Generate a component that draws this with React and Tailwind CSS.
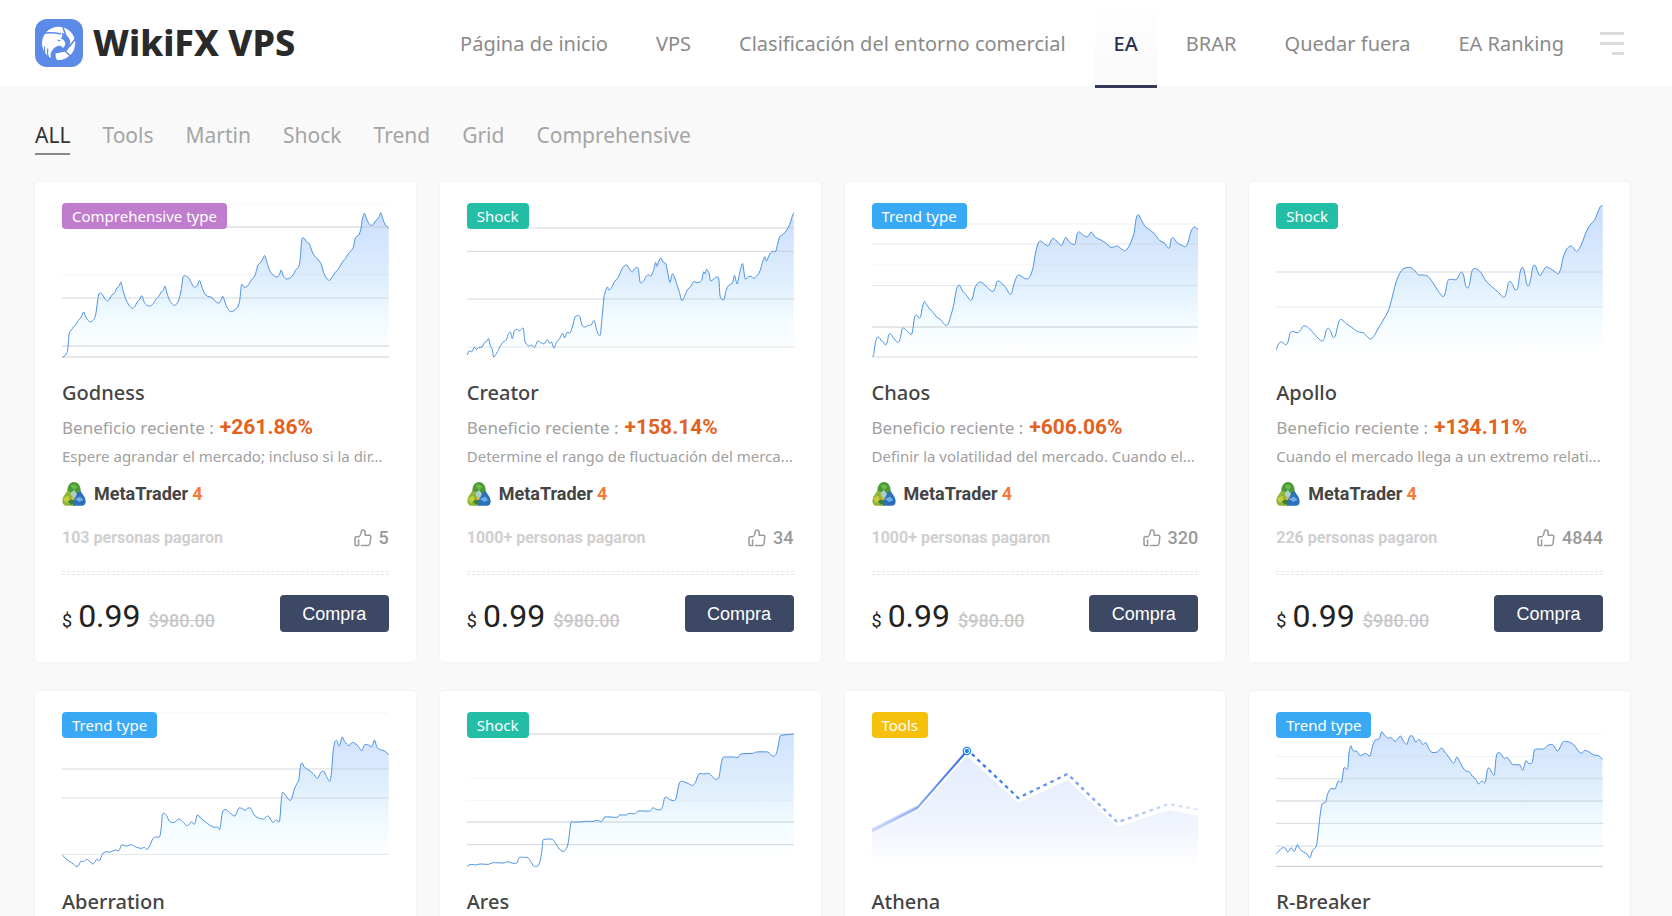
import React, { useState } from 'react'

const navLinks = [
    "Página de inicio",
    "VPS",
    "Clasificación del entorno comercial",
    "EA",
    "BRAR",
    "Quedar fuera",
    "EA Ranking",
];

const categories = ["ALL", "Tools", "Martin", "Shock", "Trend", "Grid", "Comprehensive"];

const badges = {
    "Comprehensive type": "bg-[#c07dce]",
    "Shock": "bg-[#24bea7]",
    "Trend type": "bg-[#3aa9f5]",
    "Tools": "bg-[#f6c00b]",
};

// grid: [y, opacity], points: x,y pairs inside of viewBox
const products = [
    {
        name: "Godness",
        type: "Comprehensive type",
        profit: "+261.86%",
        desc: "Espere agrandar el mercado; incluso si la dir...",
        paid: "103 personas pagaron",
        likes: 5,
        viewBox: "95 70 981 465",
        grid: [[71, 0.15], [142, 0.9], [285, 0.2], [355, 0.7], [499, 0.9], [532, 0.9]],
        points: "96,532 103,529 111,515 114,490 117,460 123,452 130,441 137,435 144,422 153,412 160,397 166,412 173,422 181,427 190,420 196,406 201,370 205,346 210,339 218,347 224,358 231,364 238,358 244,347 253,339 260,325 267,318 272,307 278,332 285,354 294,373 305,386 314,380 320,368 329,358 335,348 341,365 349,376 360,379 369,372 376,360 386,350 392,338 399,332 404,319 411,343 418,362 426,373 433,377 441,371 447,356 453,330 458,294 463,288 475,294 483,309 491,322 500,319 508,303 515,322 523,341 532,350 545,353 554,364 565,370 572,362 578,350 585,370 592,386 602,396 614,391 624,379 629,360 634,315 643,323 653,318 662,303 673,290 679,272 683,256 692,248 698,237 704,228 712,254 720,276 730,287 741,292 748,284 753,271 759,287 768,298 780,295 789,285 797,270 805,263 810,240 815,180 822,176 830,188 838,193 846,216 853,228 862,238 873,252 880,278 889,295 898,302 906,292 915,279 923,270 932,256 939,244 946,237 953,224 963,213 970,202 976,174 986,166 992,149 997,118 1003,101 1010,119 1019,135 1028,136 1036,124 1046,114 1052,99 1059,120 1066,136 1076,146",
    },
    {
        name: "Creator",
        type: "Shock",
        profit: "+158.14%",
        desc: "Determine el rango de fluctuación del merca...",
        paid: "1000+ personas pagaron",
        likes: 34,
        viewBox: "91 70 981 465",
        grid: [[145, 0.8], [215, 0.8], [358, 0.8], [502, 0.5]],
        points: "92,526 97,514 106,516 113,502 118,509 126,504 136,502 143,489 151,484 156,477 161,498 167,510 171,532 177,525 183,516 190,501 199,488 209,481 216,461 222,458 227,477 233,454 241,449 249,454 260,446 265,485 276,499 286,496 294,504 303,484 314,490 323,492 332,480 339,491 345,487 352,505 360,487 369,477 378,461 384,475 391,459 401,459 409,436 416,411 429,410 436,436 445,442 456,437 464,436 473,423 482,457 491,467 495,428 499,390 503,348 512,322 517,331 525,324 534,305 543,297 550,282 559,263 570,256 579,268 587,277 595,266 605,266 611,308 622,303 629,290 637,285 643,290 651,272 657,248 661,260 667,244 673,235 681,248 688,252 693,275 700,308 707,283 713,290 721,314 728,335 736,363 744,350 753,330 763,320 771,306 781,309 795,303 801,277 806,282 810,269 818,281 822,303 830,300 839,292 847,298 851,350 862,360 869,332 877,317 888,310 894,287 902,313 908,287 914,262 919,253 926,297 936,291 945,290 952,296 963,287 971,273 977,252 985,231 990,244 1000,223 1009,215 1018,215 1023,195 1030,171 1040,164 1051,151 1060,134 1066,114 1072,99",
    },
    {
        name: "Chaos",
        type: "Trend type",
        profit: "+606.06%",
        desc: "Definir la volatilidad del mercado. Cuando el...",
        paid: "1000+ personas pagaron",
        likes: 320,
        viewBox: "93 70 981 465",
        grid: [[133, 0.3], [193, 0.45], [256, 0.2], [318, 0.5], [442, 0.9], [532, 0.7]],
        points: "94,532 98,525 103,490 108,474 114,473 121,483 127,487 133,496 139,487 143,466 149,462 156,473 164,483 172,488 178,476 183,449 188,445 196,452 204,459 212,464 217,440 221,411 227,406 234,415 239,411 244,384 250,366 257,374 266,388 277,399 287,412 299,420 308,432 316,437 323,430 330,407 338,377 345,336 350,320 356,317 365,334 377,347 388,362 395,355 402,325 410,311 420,307 433,317 445,329 456,336 463,324 467,307 474,304 484,313 495,324 505,342 512,341 519,314 528,290 535,286 546,293 558,298 567,291 576,266 583,225 590,196 597,184 608,190 622,199 630,184 638,176 650,187 662,198 669,183 675,173 683,184 694,193 703,192 709,162 716,157 728,167 741,171 751,157 764,173 778,180 794,189 808,202 820,202 830,199 842,208 854,213 863,202 871,186 880,159 886,117 893,105 902,122 914,141 929,152 943,165 957,183 971,190 981,204 987,203 991,180 997,174 1010,190 1024,197 1034,201 1042,188 1051,154 1060,142 1068,146 1074,152",
    },
    {
        name: "Apollo",
        type: "Shock",
        profit: "+134.11%",
        desc: "Cuando el mercado llega a un extremo relati...",
        paid: "226 personas pagaron",
        likes: 4844,
        viewBox: "93 70 981 465",
        grid: [[277, 0.7], [382, 0.4]],
        points: "94,510 99,496 106,487 115,490 122,496 129,487 135,461 143,455 156,459 166,453 173,441 182,439 194,448 208,463 222,478 232,484 239,473 244,451 251,446 257,455 264,473 271,469 277,444 283,423 291,420 304,432 320,443 339,456 356,460 367,471 377,478 386,471 399,448 415,421 430,394 440,360 452,313 462,286 472,270 484,264 497,264 508,271 520,285 535,286 549,290 563,308 580,334 594,351 601,341 608,305 616,299 634,300 642,288 649,277 656,286 662,317 668,325 674,314 681,275 690,266 703,273 713,286 723,304 741,321 762,339 776,353 784,342 790,312 796,305 803,314 811,331 819,323 826,277 833,263 839,277 846,314 852,318 858,296 864,262 871,257 878,275 886,288 894,276 904,262 917,267 930,276 940,283 948,266 955,234 966,208 978,199 986,205 995,216 1004,206 1013,187 1023,160 1035,137 1049,122 1058,100 1066,82 1074,77",
    },
    {
        name: "Aberration",
        type: "Trend type",
        profit: "+190.32%",
        desc: "Sistema clásico de seguimiento de tenden...",
        paid: "310 personas pagaron",
        likes: 27,
        viewBox: "95 82 981 465",
        grid: [[85, 0.2], [253, 0.7], [340, 0.6], [509, 0.5]],
        points: "96,511 106,522 119,531 129,538 137,545 145,543 151,530 160,531 169,524 178,530 187,538 194,532 199,524 208,527 216,509 224,502 240,502 255,496 266,498 274,481 288,484 304,480 316,487 333,491 343,488 350,495 358,484 368,462 378,457 388,456 393,430 396,392 402,386 409,393 418,410 432,413 446,403 457,411 469,422 475,421 484,411 493,419 501,391 511,400 527,413 548,427 562,427 569,433 577,382 587,375 598,383 614,394 625,371 634,371 645,377 652,371 662,371 672,391 685,400 700,403 711,394 717,397 728,413 739,405 748,410 753,350 757,323 766,332 777,346 784,343 792,315 800,297 806,285 811,245 816,235 823,248 836,256 849,267 862,281 871,265 880,259 888,273 899,290 904,264 909,200 914,173 920,168 928,184 936,157 944,171 956,183 967,173 981,181 995,198 1002,182 1013,180 1025,186 1033,166 1041,188 1051,195 1064,199 1076,210",
    },
    {
        name: "Ares",
        type: "Shock",
        profit: "+175.48%",
        desc: "Estrategia de oscilación con control estric...",
        paid: "198 personas pagaron",
        likes: 61,
        viewBox: "91 82 981 465",
        grid: [[148, 0.9], [281, 0.15], [347, 0.2], [412, 0.9], [480, 0.8]],
        points: "92,545 103,539 117,541 130,538 155,539 170,534 200,535 213,531 225,535 240,535 248,519 260,518 274,519 283,531 291,544 302,545 309,534 315,505 319,468 325,464 347,464 358,477 368,493 379,500 388,494 395,474 403,414 410,412 430,412 450,410 470,410 480,407 496,410 505,397 541,398 549,391 569,391 577,386 594,387 605,379 620,379 641,379 649,369 659,374 673,375 679,362 684,340 690,338 701,345 712,348 719,340 725,309 731,291 741,291 756,297 768,302 777,293 787,268 802,268 817,266 828,276 840,285 848,276 853,244 859,219 870,217 890,217 905,218 914,208 948,206 960,202 994,202 1001,209 1010,214 1018,210 1024,191 1030,158 1036,152 1072,148",
    },
    {
        name: "Athena",
        type: "Tools",
        profit: "+88.20%",
        desc: "Herramienta auxiliar para gestionar sus o...",
        paid: "540 personas pagaron",
        likes: 112,
        viewBox: "93 82 981 465",
        forecast: true,
    },
    {
        name: "R-Breaker",
        type: "Trend type",
        profit: "+302.75%",
        desc: "Combina la ruptura de tendencia y la reve...",
        paid: "275 personas pagaron",
        likes: 93,
        viewBox: "93 82 981 465",
        grid: [[148, 0.2], [215, 0.25], [282, 0.6], [349, 0.9], [416, 0.7], [484, 0.7], [545, 1]],
        points: "93,507 101,501 109,491 121,490 129,503 138,489 148,500 157,480 165,494 176,502 187,509 195,520 203,497 214,485 219,450 225,395 231,359 242,352 248,328 258,311 270,313 280,289 290,292 297,250 308,252 312,205 318,183 324,198 336,200 346,213 362,206 375,214 383,184 391,166 403,162 410,142 419,152 431,161 438,158 450,170 458,163 467,154 476,170 486,179 494,156 504,155 512,172 523,164 533,179 543,174 552,192 561,203 577,202 590,190 600,203 613,219 625,236 630,231 636,217 645,232 655,250 663,259 673,261 682,274 693,284 701,298 711,289 721,293 728,254 735,252 748,272 753,225 758,205 767,206 778,221 788,219 803,239 825,241 834,257 843,228 851,236 862,233 868,199 874,193 896,193 908,183 920,179 927,183 937,199 945,190 954,172 965,170 978,174 990,184 1003,202 1012,205 1021,197 1035,203 1048,211 1062,213 1073,225",
    },
];

// catmull-rom to bezier, keeps the line soft between the samples
const toPath = (points) => {
    const p = points.split(" ").map((item) => item.split(",").map(Number));
    let d = `M${p[0]}`;
    for(let i = 0; i < p.length - 1; i++) {
        const a = p[i - 1] || p[i];
        const b = p[i];
        const c = p[i + 1];
        const e = p[i + 2] || c;
        d += `C${b[0] + (c[0] - a[0]) / 7},${b[1] + (c[1] - a[1]) / 7} ${c[0] - (e[0] - b[0]) / 7},${c[1] - (e[1] - b[1]) / 7} ${c}`;
    }
    return { line: d, area: `${d}L${p[p.length - 1][0]},520L${p[0][0]},520Z` };
}

const Chart = ({product}) => {
    const id = `fill-${product.name}`;

    if(product.forecast) {
        return (
            <svg className="block h-full w-full" viewBox={product.viewBox} preserveAspectRatio="none">
                <defs>
                    <linearGradient id={id} x1="0" y1="200" x2="0" y2="547" gradientUnits="userSpaceOnUse">
                        <stop offset="0" stopColor="#e3ebfd" />
                        <stop offset="0.6" stopColor="#eff3fd" />
                        <stop offset="1" stopColor="#ffffff" />
                    </linearGradient>
                    <linearGradient id="solid-line" x1="93" y1="0" x2="378" y2="0" gradientUnits="userSpaceOnUse">
                        <stop offset="0" stopColor="#c9d8f8" />
                        <stop offset="0.5" stopColor="#7fa5f3" />
                        <stop offset="1" stopColor="#2a66e8" />
                    </linearGradient>
                    <linearGradient id="dash-line" x1="378" y1="0" x2="1074" y2="0" gradientUnits="userSpaceOnUse">
                        <stop offset="0" stopColor="#2f6fee" />
                        <stop offset="0.5" stopColor="#7ba1f3" />
                        <stop offset="1" stopColor="#e3ebfb" />
                    </linearGradient>
                </defs>
                <path d="M93,449L232,378L378,214L532,354L680,286L830,427L984,376L1074,394V547H93Z" fill={`url(#${id})`} />
                <path d="M93,438L230,368" fill="none" stroke="#dbe5fa" strokeWidth="14" />
                <path d="M93,438L230,368L378,199" fill="none" stroke="url(#solid-line)" strokeWidth="6" />
                <path d="M393,208L532,340L680,268L830,413L984,358L1074,375" fill="none" stroke="url(#dash-line)" strokeWidth="7" strokeDasharray="11 12" />
                <circle cx="378" cy="199" r="13" fill="#1f86ea" />
                <circle cx="378" cy="199" r="8" fill="#1f86ea" stroke="#fff" strokeWidth="3" />
            </svg>
        )
    }

    const { line, area } = toPath(product.points);

    return (
        <svg className="block h-full w-full" viewBox={product.viewBox} preserveAspectRatio="none">
            <defs>
                <linearGradient id={id} x1="0" y1="100" x2="0" y2="520" gradientUnits="userSpaceOnUse">
                    <stop offset="0" stopColor="#cbdefd" />
                    <stop offset="0.5" stopColor="#e0effd" />
                    <stop offset="0.75" stopColor="#f1fbff" />
                    <stop offset="1" stopColor="#ffffff" />
                </linearGradient>
            </defs>
            <path d={area} fill={`url(#${id})`} />
            {
                product.grid.map(([y, opacity]) => (
                    <path key={y} d={`M90,${y}H1080`} stroke="#c3cbcf" strokeOpacity={opacity} strokeWidth="3" />
                ))
            }
            <path d={line} fill="none" stroke="#4a90df" strokeWidth="3" strokeLinejoin="round" />
        </svg>
    )
}

const Logo = () => (
    <svg className="h-12 w-12 shrink-0" viewBox="0 0 48 48">
        <rect width="48" height="48" rx="12" fill="#5b8ae8" />
        <circle cx="23.6" cy="24.3" r="16.6" fill="#fff" />
        {/* gap between the head and the shutter ring */}
        <path d="M26.500 13.500Q33.500 16 35.200 22Q35.500 28.500 31 32.500L20.500 34.500Q20.200 38 22 41.500L16.500 41Q14.500 36 16.800 32Q18.500 28.500 22.500 27Q26.500 26 28 29Q31.800 25.500 29.500 22.300Q28.500 20.300 25.500 19.600Q28.500 17.500 26.500 13.500Z" fill="#5b8ae8" />
        {/* shutter cuts */}
        <path d="M7 14.800Q15 12.800 26 15M27.500 7L31 17M41 19L34 28M36.500 38L30 32" fill="none" stroke="#5b8ae8" strokeWidth="1.500" />
        {/* feathers */}
        <path d="M12.800 29.500Q11.800 34 13.500 39M9.500 27.500Q9.300 31 10 34" fill="none" stroke="#5b8ae8" strokeWidth="1.200" />
        <path d="M22 20.500L26 21.300L23.800 22.600Z" fill="#5b8ae8" />
    </svg>
)

const MetaTraderIcon = () => (
    <svg className="h-6 w-6" viewBox="0 0 24 24">
        <path d="M12 0C8.500 0 6 3 5.500 7L5 12L12 14L19 12L18.500 7C18 3 15.500 0 12 0Z" fill="#4a9a3c" />
        <path d="M5.500 8.500L1.500 14.500C-.5 18.500 0 23.800 4.500 23.800H12L14 16L9 10Z" fill="#8fb536" />
        <path d="M18.500 9L22.500 15C24.500 19 24 23.800 19.500 23.800H11L10 17L15 11Z" fill="#2d6fb8" />
        <path d="M8.500 4Q12.500 .5 15.500 5L12 8Z" fill="#6fba48" />
        <path d="M1.500 17.500Q3 14 6.500 14L7.500 18L4 21Z" fill="#c3cf3e" />
        <path d="M12 8L15 12L13 16L9.500 14.500L8.500 11Z" fill="#a9cfc8" />
        <path d="M13 17L18 14.500L21.500 18L17 20Z" fill="#6aaee6" />
        <path d="M6 19.500L10 17L12.500 20.500L9 23Z" fill="#3d7f3a" />
        <circle cx="11" cy="16.500" r="1.600" fill="#e8b44a" />
    </svg>
)

const ThumbIcon = () => (
    <svg className="h-[18px] w-[18px]" viewBox="0 0 18 18" fill="none" stroke="#9b9b9b" strokeWidth="1.500" strokeLinejoin="round" strokeLinecap="round">
        <path d="M4.500 16.500H2.200Q1 16.500 1 15.300V9Q1 7.800 2.200 7.800H4.800Q7 6.500 7.200 3.200Q7.300 1 9 1Q11.200 1 11.200 3.800V6.300H15.200Q17 6.300 16.800 8.200L16 14.500Q15.700 16.500 13.800 16.500H7.500" />
        <path d="M4.600 11V16.500" />
    </svg>
)

const Card = ({product}) => (
    <article className="flex min-w-0 flex-col rounded bg-white px-[27px] pb-[30px] pt-[21px] shadow-[0_0_3px_rgba(0,0,0,0.06)]">
        <div className="relative h-[155px]">
            <Chart product={product} />
            <span className={`absolute left-0 top-0 h-[26px] rounded-sm px-[10px] text-[15px] leading-[26px] text-white ${badges[product.type]}`}>
                {product.type}
            </span>
        </div>
        <h2 className="mt-[21px] text-xl font-medium leading-7 text-[#444]">{product.name}</h2>
        <p className="mt-[6px] flex h-7 items-baseline gap-[6px] whitespace-nowrap text-[17px] leading-7 text-[#a0a0a0]">
            <span>Beneficio reciente :</span>
            <span className="font-['Roboto',sans-serif] text-[21px] leading-7 font-bold text-[#e2621f]">{product.profit}</span>
        </p>
        <p className="mt-[3px] whitespace-nowrap text-[15px] leading-6 text-[#a0a0a0]">{product.desc}</p>
        <div className="mt-[13px] flex h-[25px] items-center font-['Roboto',sans-serif]">
            <MetaTraderIcon />
            <span className="ml-2 text-lg font-bold text-[#444]">MetaTrader</span>
            <span className="ml-1 text-lg font-bold text-[#f47b3c]">4</span>
        </div>
        <div className="mt-5 flex h-6 items-center justify-between font-['Roboto',sans-serif]">
            <span className="text-base font-bold text-[#cfcfcf]">{product.paid}</span>
            <button type="button" aria-label="Me gusta" className="flex items-center gap-[7px] text-lg font-medium text-[#999]">
                <ThumbIcon />
                {product.likes}
            </button>
        </div>
        <div className="mt-[21px] h-1 border-y border-dashed border-[#e8e8e8]"></div>
        <div className="mt-5 flex h-[37px] items-start justify-between">
            <p className="flex items-baseline font-['Roboto',sans-serif] leading-[42px] text-[#222]">
                <span className="text-lg">$</span>
                <span className="ml-[6px] text-[32px] leading-[42px]">0.99</span>
                <del className="ml-2 text-lg font-medium text-[#c8c8c8]">$980.00</del>
            </p>
            <button type="button" className="h-[37px] w-[109px] rounded bg-[#3c4864] font-['Liberation_Sans',Arial,sans-serif] text-lg text-white">
                Compra
            </button>
        </div>
    </article>
)

const App = () => {

    const [activeCategory, setActiveCategory] = useState("ALL");

    return (
        <div className="min-h-screen bg-[#f9f9f9] font-['Noto_Sans',sans-serif]">
            {/* header */}
            <header className="flex h-[86px] items-center bg-white pl-[35px] pr-12">
                <a href="#" className="flex items-center gap-[10px]">
                    <Logo />
                    <span className="whitespace-nowrap text-4xl font-extrabold text-[#2a2a2a]">WikiFX VPS</span>
                </a>
                <nav className="ml-auto flex h-full gap-[10px]">
                    {
                        navLinks.map((link) => (
                            <a
                                href="#"
                                key={link}
                                className={`flex h-[88px] items-center whitespace-nowrap border-b-[3px] px-[19px] pt-[3px] text-xl ${
                                link === "EA"
                                ? "border-[#34395a] bg-linear-to-b from-white to-[#f9f9fa] font-medium text-[#2a3150]"
                                : "border-transparent text-[#8a8a8a]"
                                }`}
                            >
                                {link}
                            </a>
                        ))
                    }
                </nav>
                <button type="button" aria-label="Menú" className="ml-[17px] flex flex-col items-end gap-[7px]">
                    <span className="h-[3px] w-6 bg-[#d9dcdd]"></span>
                    <span className="h-[3px] w-6 bg-[#d9dcdd]"></span>
                    <span className="h-[3px] w-3 bg-[#d9dcdd]"></span>
                </button>
            </header>

            <main className="pb-7 pl-[35px] pr-[42px]">
                {/* categories */}
                <div className="flex h-24 items-start gap-8 pt-[33px]">
                    {
                        categories.map((category) => (
                            <button
                                type="button"
                                key={category}
                                onClick={() => setActiveCategory(category)}
                                className={`h-[36px] border-b-2 pb-[2px] text-[21px] leading-[30px] ${
                                activeCategory === category
                                ? "border-[#8a8a8a] text-[#333]"
                                : "border-transparent text-[#a5a5a5]"
                                }`}
                            >
                                {category}
                            </button>
                        ))
                    }
                </div>
                {/* products */}
                <div className="grid grid-cols-4 gap-x-6 gap-y-[29px]">
                    {
                        products.map((product) => (
                            <Card key={product.name} product={product} />
                        ))
                    }
                </div>
            </main>
        </div>
    )
}

export default App
